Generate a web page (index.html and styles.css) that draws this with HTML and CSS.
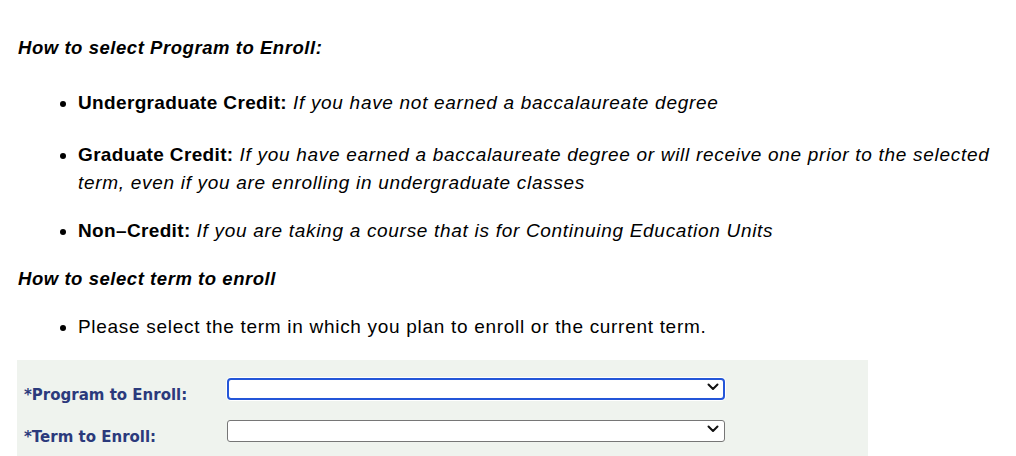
FILE: index.html
```html
<!DOCTYPE html>
<html lang="en">
<head>
  <meta charset="UTF-8">
  <title>Enrollment</title>
  <link rel="stylesheet" href="styles.css">
</head>
<body>
  <div class="page">
    <p class="howto">How to select Program to Enroll:</p>
    <ul class="tips">
      <li><strong>Undergraduate Credit:</strong> <em>If you have not earned a baccalaureate degree</em></li>
      <li class="wrap"><strong>Graduate Credit:</strong> <em>If you have earned a baccalaureate degree or will receive one prior to the selected term, even if you are enrolling in undergraduate classes</em></li>
      <li><strong>Non&#8211;Credit:</strong> <em>If you are taking a course that is for Continuing Education Units</em></li>
    </ul>

    <p class="howto">How to select term to enroll</p>
    <ul class="tips last">
      <li>Please select the term in which you plan to enroll or the current term.</li>
    </ul>

    <div class="enroll-form">
      <label for="program">*Program to Enroll:</label>
      <div class="select-wrap">
        <select id="program" class="focused"><option></option></select>
        <svg class="chevron" width="12" height="8" viewBox="0 0 12 8"><path d="M1.5 1.5 L6 6 L10.5 1.5" fill="none" stroke="#111" stroke-width="2" stroke-linecap="round" stroke-linejoin="round"/></svg>
      </div>

      <label for="term">*Term to Enroll:</label>
      <div class="select-wrap">
        <select id="term"><option></option></select>
        <svg class="chevron" width="12" height="8" viewBox="0 0 12 8"><path d="M1.5 1.5 L6 6 L10.5 1.5" fill="none" stroke="#111" stroke-width="2" stroke-linecap="round" stroke-linejoin="round"/></svg>
      </div>
    </div>
  </div>
</body>
</html>
```

FILE: styles.css
```css
body {
  margin: 0;
  padding: 0 8px 0 17px;
  font-family: "Liberation Sans", Arial, sans-serif;
  font-size: 19px;
  letter-spacing: 0.7px;
  color: #000;
  background: #fff;
}

.page {
  padding-top: 34px;
}

.howto {
  margin: 0;
  line-height: 28px;
  font-size: 18.5px;
  font-style: italic;
  font-weight: bold;
  letter-spacing: 0.55px;
  padding-left: 1px;
}

.tips {
  margin: 27px 0 20px;
  padding-left: 61px;
  line-height: 28px;
}

.tips.last {
  margin: 20px 0 0;
}

.tips li {
  margin-bottom: 24px;
}

.tips li:last-child {
  margin-bottom: 0;
}

.tips li.wrap {
  margin-bottom: 20px;
}

.tips strong {
  font-weight: bold;
  letter-spacing: 0.35px;
}

/* Program / term selection panel */
.enroll-form {
  width: 844px;
  background: #eff3ee;
  display: grid;
  grid-template-columns: 203px 498px;
  row-gap: 20px;
  align-items: center;
  padding: 16px 0 16px 7px;
  margin-top: 19px;
  letter-spacing: 0;
}

.enroll-form label {
  font-family: "DejaVu Sans", Verdana, sans-serif;
  font-weight: bold;
  font-size: 15px;
  color: #2b3a7c;
  position: relative;
  top: 8px;
}

.select-wrap {
  position: relative;
  height: 22px;
}

.select-wrap select {
  appearance: none;
  -webkit-appearance: none;
  width: 100%;
  height: 22px;
  margin: 0;
  background: #fff;
  border: 1px solid #767676;
  border-radius: 3px;
  box-sizing: border-box;
}

.select-wrap select.focused {
  border: 2px solid #2456d8;
  border-radius: 4px;
  box-shadow: 0 0 0 1px #fff;
}

.chevron {
  position: absolute;
  right: 6px;
  top: 7px;
  pointer-events: none;
}
```
